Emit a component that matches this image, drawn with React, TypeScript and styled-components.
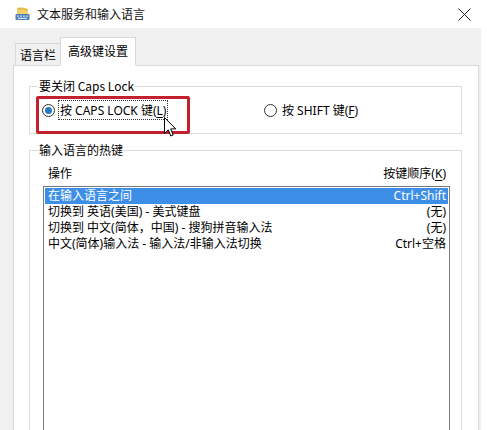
import styled, { createGlobalStyle } from "styled-components";

const GlobalStyle = createGlobalStyle`
	html, body {
		margin: 0;
		padding: 0;
		background: #ffffff;
	}
	body {
		font-family: "Noto Sans", "Noto Sans CJK SC", sans-serif;
		font-size: 12px;
		color: #000;
	}
`;

const Window = styled.div`
	width: 481px;
	height: 430px;
	overflow: hidden;
	background: #fff;
	display: flex;
	flex-direction: column;
`;

const TitleBar = styled.div`
	height: 28px;
	flex: none;
	display: flex;
	align-items: center;
	padding-left: 15px;
	background: #fff;
`;

const Title = styled.span`
	margin-left: 7px;
	font-family: "Noto Sans CJK SC", sans-serif;
	font-size: 12px;
	line-height: 16px;
	color: #111;
`;

const CloseButton = styled.div`
	margin-left: auto;
	width: 46px;
	height: 28px;
	display: flex;
	align-items: center;
	justify-content: center;
	margin-right: -6px;
`;

const Body = styled.div`
	flex: 1;
	background: #f0f0f0;
	padding: 9px 2px 0 13px;
	display: flex;
	flex-direction: column;
`;

const TabStrip = styled.div`
	display: flex;
	align-items: flex-end;
	margin-left: 2px;
	position: relative;
	z-index: 1;
	margin-bottom: -1px;
`;

const Tab = styled.div<{ $active?: boolean }>`
	height: ${(p) => (p.$active ? "25px" : "21px")};
	padding: 0 ${(p) => (p.$active ? "7px" : "4px")};
	display: flex;
	align-items: center;
	font-family: "Noto Sans CJK SC", sans-serif;
	font-size: 12px;
	background: ${(p) => (p.$active ? "#fff" : "#f0f0f0")};
	border: 1px solid #d9d9d9;
	border-bottom: ${(p) => (p.$active ? "1px solid #fff" : "1px solid #d9d9d9")};
	margin-left: ${(p) => (p.$active ? "-1px" : "0")};
	padding-bottom: ${(p) => (p.$active ? "2px" : "0")};
`;

const Panel = styled.div`
	flex: 1;
	background: #fff;
	border: 1px solid #d9d9d9;
	border-bottom: none;
	display: flex;
	flex-direction: column;
`;

const Group = styled.fieldset<{ $top: number; $bottom: number }>`
	position: relative;
	margin: ${(p) => p.$top}px 16px 0 15px;
	padding: 0 10px ${(p) => p.$bottom}px 8px;
	border: 1px solid #dcdcdc;
	min-width: 0;
`;

const Legend = styled.legend`
	padding: 0 1px;
	font-family: "Noto Sans CJK SC", sans-serif;
	font-size: 12px;
	line-height: 16px;
`;

const RadioRow = styled.div`
	display: flex;
	align-items: center;
	height: 28px;
	padding-top: 2px;
	margin-left: 4px;
`;

const RadioLabel = styled.label<{ $width?: number }>`
	display: flex;
	align-items: center;
	width: ${(p) => (p.$width ? `${p.$width}px` : "auto")};
	flex: none;
`;

const RadioCircle = styled.span<{ $checked?: boolean }>`
	width: 11px;
	height: 11px;
	border-radius: 50%;
	border: 1px solid #333;
	display: flex;
	align-items: center;
	justify-content: center;
	background: #fff;
	flex: none;
	&::after {
		content: "";
		width: 7px;
		height: 7px;
		border-radius: 50%;
		background: ${(p) => (p.$checked ? "#2678c9" : "transparent")};
	}
`;

const RadioText = styled.span<{ $focused?: boolean }>`
	margin-left: 3px;
	padding: 1px 1px 0 1px;
	height: 17px;
	line-height: 17px;
	border: 1px dotted ${(p) => (p.$focused ? "#333" : "transparent")};
	white-space: nowrap;
`;

const Mnemonic = styled.span`
	text-decoration: underline;
	text-underline-offset: 2px;
`;

const Highlight = styled.div`
	position: absolute;
	left: 6px;
	top: 2px;
	width: 148px;
	height: 32px;
	border: 3px solid #c2202c;
	border-radius: 2px;
	pointer-events: none;
`;

const Cursor = styled.svg`
	position: absolute;
	left: 134px;
	top: 23px;
`;

const ListHeader = styled.div`
	display: flex;
	justify-content: space-between;
	margin: 8px 1px 4px 5px;
	padding: 0 4px 0 5px;
	height: 16px;
	line-height: 16px;
`;

const ListBox = styled.div`
	margin: 0 1px 0 5px;
	height: 300px;
	border: 1px solid #7a7a7a;
	padding: 1px;
	background: #fff;
`;

const ListRow = styled.div<{ $selected?: boolean }>`
	display: flex;
	justify-content: space-between;
	height: 16px;
	line-height: 16px;
	padding: 0 2px 0 3px;
	background: ${(p) => (p.$selected ? "#3d8ee6" : "transparent")};
	color: ${(p) => (p.$selected ? "#fff" : "#000")};
	white-space: nowrap;
`;

const rows = [
	{ name: "在输入语言之间", key: "Ctrl+Shift" },
	{ name: "切换到 英语(美国) - 美式键盘", key: "(无)" },
	{ name: "切换到 中文(简体，中国) - 搜狗拼音输入法", key: "(无)" },
	{ name: "中文(简体)输入法 - 输入法/非输入法切换", key: "Ctrl+空格" },
];

function AppIcon() {
	return (
		<svg width="15" height="14" viewBox="0 0 15 14">
			<path d="M2 1 Q7 -1 13 2 L13 7 L2 7 Z" fill="#f2cf6a" />
			<path d="M3 2 Q7 1 12 3" stroke="#e0a83a" strokeWidth="1" fill="none" />
			<rect x="0.5" y="7" width="14" height="6" rx="1" fill="#4d7fb8" />
			<rect x="2" y="8.5" width="2" height="1.2" fill="#cfe0f2" />
			<rect x="5" y="8.5" width="2" height="1.2" fill="#cfe0f2" />
			<rect x="8" y="8.5" width="2" height="1.2" fill="#cfe0f2" />
			<rect x="11" y="8.5" width="2" height="1.2" fill="#cfe0f2" />
			<rect x="3" y="10.8" width="9" height="1.2" fill="#cfe0f2" />
		</svg>
	);
}

export default function App(): JSX.Element {
	return (
		<>
			<GlobalStyle />
			<Window>
				<TitleBar>
					<AppIcon />
					<Title>文本服务和输入语言</Title>
					<CloseButton>
						<svg width="13" height="13" viewBox="0 0 13 13">
							<path d="M0.5 0.5 L12.5 12.5 M12.5 0.5 L0.5 12.5" stroke="#222" strokeWidth="1" />
						</svg>
					</CloseButton>
				</TitleBar>
				<Body>
					<TabStrip>
						<Tab>语言栏</Tab>
						<Tab $active>高级键设置</Tab>
					</TabStrip>
					<Panel>
						<Group $top={12} $bottom={9}>
							<Legend>要关闭 Caps Lock</Legend>
							<RadioRow>
								<RadioLabel $width={222}>
									<RadioCircle $checked />
									<RadioText $focused>
										按 CAPS LOCK 键(<Mnemonic>L</Mnemonic>)
									</RadioText>
								</RadioLabel>
								<RadioLabel>
									<RadioCircle />
									<RadioText>
										按 SHIFT 键(<Mnemonic>F</Mnemonic>)
									</RadioText>
								</RadioLabel>
							</RadioRow>
							<Highlight />
							<Cursor width="13" height="21" viewBox="0 0 13 21">
								<path
									d="M0.5 0.5 L0.5 16.5 L4.3 12.8 L6.8 19 L9.2 18 L6.7 11.9 L11.8 11.9 Z"
									fill="#fff"
									stroke="#000"
									strokeWidth="1"
									strokeLinejoin="round"
								/>
							</Cursor>
						</Group>
						<Group $top={8} $bottom={6}>
							<Legend>输入语言的热键</Legend>
							<ListHeader>
								<span>操作</span>
								<span>
									按键顺序(<Mnemonic>K</Mnemonic>)
								</span>
							</ListHeader>
							<ListBox>
								{rows.map((r, i) => (
									<ListRow key={r.name} $selected={i === 0}>
										<span>{r.name}</span>
										<span>{r.key}</span>
									</ListRow>
								))}
							</ListBox>
						</Group>
					</Panel>
				</Body>
			</Window>
		</>
	);
}
